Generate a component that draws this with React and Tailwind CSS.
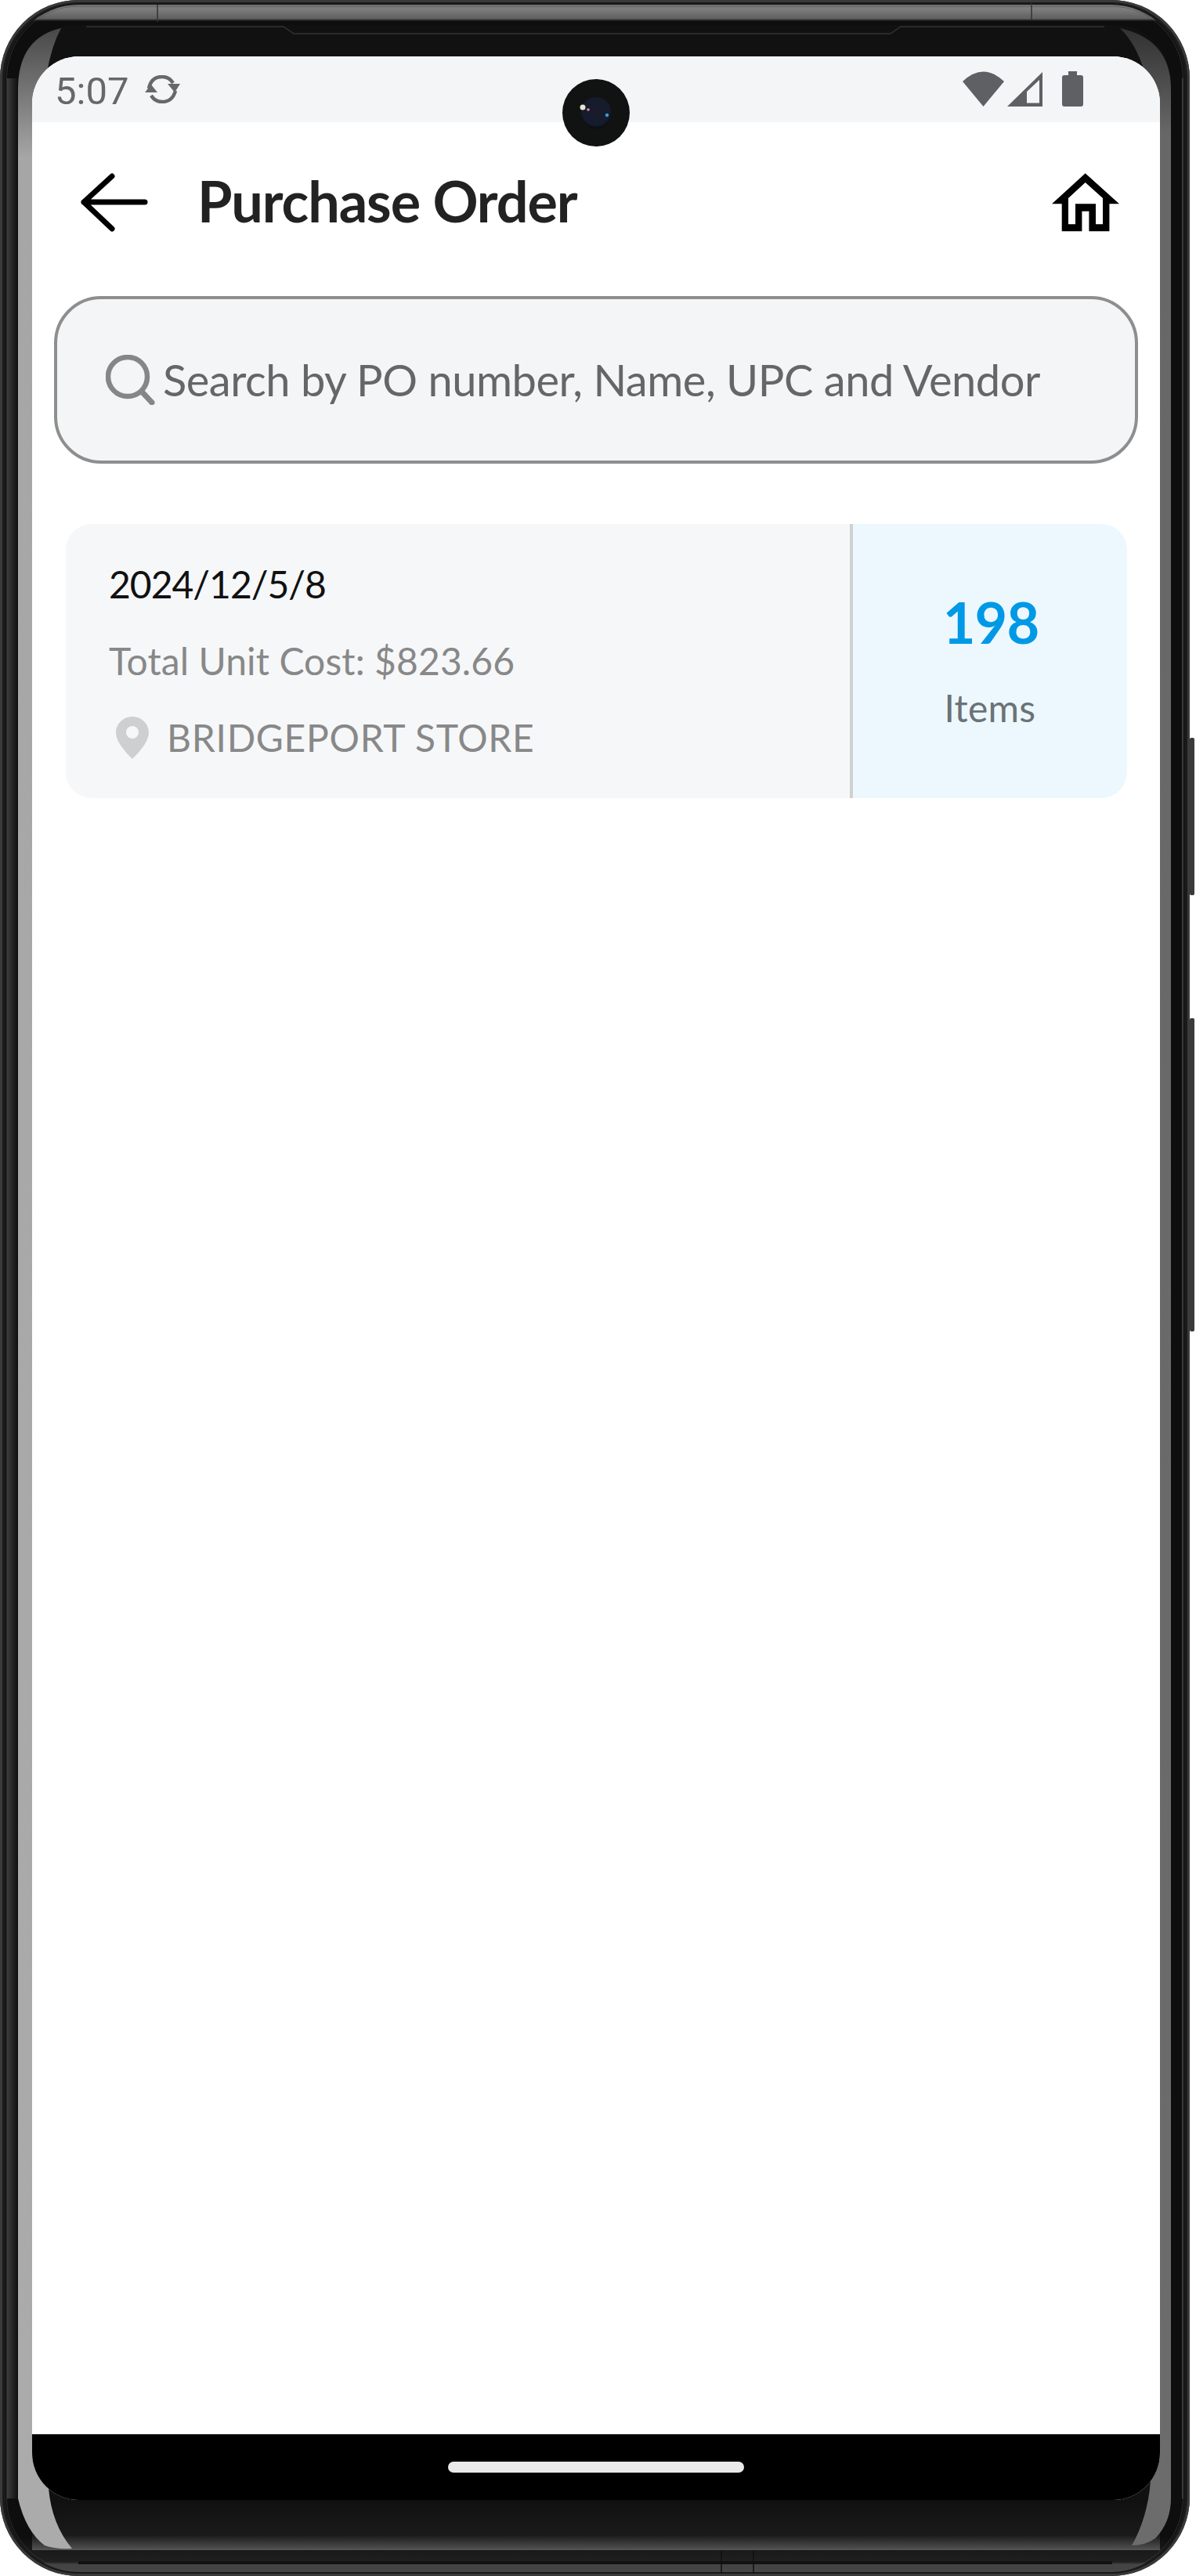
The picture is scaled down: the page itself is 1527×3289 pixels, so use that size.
const Bezel = () => (
  <svg className="absolute inset-0" width="1527" height="3289" viewBox="0 0 1527 3289">
    <defs>
      <linearGradient id="band" gradientUnits="userSpaceOnUse" x1="0" y1="0" x2="0" y2="3289">
        <stop offset="0.0018" stopColor="#747474" />
        <stop offset="0.0035" stopColor="#7e7e7e" />
        <stop offset="0.0072" stopColor="#606060" />
        <stop offset="0.0082" stopColor="#0e0e0e" />
        <stop offset="0.985" stopColor="#0e0e0e" />
        <stop offset="0.9905" stopColor="#1a1a1a" />
        <stop offset="0.9945" stopColor="#202020" />
        <stop offset="0.9955" stopColor="#444444" />
        <stop offset="0.9985" stopColor="#444444" />
        <stop offset="1" stopColor="#222222" />
      </linearGradient>
      <linearGradient id="glass" gradientUnits="userSpaceOnUse" x1="0" y1="3192" x2="0" y2="3256">
        <stop offset="0" stopColor="#101010" />
        <stop offset="0.7" stopColor="#1a1a1a" />
        <stop offset="0.95" stopColor="#4a4a4a" />
        <stop offset="1" stopColor="#555555" />
      </linearGradient>
      <linearGradient id="leftBand" gradientUnits="userSpaceOnUse" x1="0" y1="40" x2="0" y2="3260">
        <stop offset="0" stopColor="#4a4a4a" />
        <stop offset="0.05" stopColor="#a6a6a6" />
        <stop offset="1" stopColor="#ababab" />
      </linearGradient>
      <linearGradient id="rightBand" gradientUnits="userSpaceOnUse" x1="0" y1="40" x2="0" y2="3260">
        <stop offset="0" stopColor="#333333" />
        <stop offset="0.04" stopColor="#676767" />
        <stop offset="1" stopColor="#6c6c6c" />
      </linearGradient>
      <linearGradient id="leftStrip" x1="0" y1="0" x2="1" y2="0">
        <stop offset="0" stopColor="#3c3c3c" />
        <stop offset="1" stopColor="#0e0e0e" />
      </linearGradient>
      <radialGradient id="lens" cx="0.5" cy="0.45" r="0.55">
        <stop offset="0" stopColor="#1a1a2a" />
        <stop offset="0.8" stopColor="#141c2c" />
        <stop offset="1" stopColor="#0a0a0e" />
      </radialGradient>
    </defs>
    <rect x="1519" y="942" width="6" height="201" rx="2" fill="#3a3a3a" />
    <rect x="1519" y="1300" width="6" height="400" rx="2" fill="#3a3a3a" />
    <rect x="0" y="0" width="1519" height="3289" rx="100" fill="#1a1a1a" />
    <rect x="1.5" y="1.5" width="1516" height="3286" rx="99" fill="none" stroke="#3a3a3a" strokeWidth="3" />
    <rect x="7" y="6" width="1505" height="3278" rx="94" fill="url(#band)" />
    <rect x="8.5" y="8" width="1502" height="3274" rx="92" fill="none" stroke="#4c4c4c" strokeWidth="1" strokeOpacity="0.5" />
    <rect x="9" y="100" width="14" height="3090" fill="url(#leftStrip)" />
    <rect x="1509" y="100" width="2" height="3090" fill="#3a3a3a" />
    <rect x="23" y="32" width="1472" height="3224" rx="72" fill="#111111" />
    <rect x="41" y="3192" width="1440" height="64" fill="url(#glass)" />
    <path d="M23 3190 L23 112 Q24 48 78 36 Q66 58 60 92 L62 3177 Q66 3223 92 3254 Q70 3255 57 3250 Q33 3232 23 3190 Z" fill="url(#leftBand)" />
    <path d="M1495 112 Q1494 50 1430 36 Q1452 58 1461 92 L1469 3168 Q1465 3215 1445 3250 Q1462 3250 1475 3241 Q1495 3220 1495 3190 Z" fill="url(#rightBand)" />
    <path d="M110 34 H362 L375 43 H1137 L1150 34 H1410" fill="none" stroke="#333333" strokeWidth="1.5" />
    <path d="M201 6 V28 M1317 4 V26" stroke="#333333" strokeWidth="1.5" />
    <path d="M921 3256 V3286 M962 3256 V3286" stroke="#111111" strokeWidth="1.5" />
    <path d="M100 3272 H1420" stroke="#111111" strokeWidth="4" />
  </svg>
);

const Camera = () => (
  <svg className="absolute left-[677px] top-[101px]" width="86" height="86" viewBox="0 0 86 86">
    <circle cx="43" cy="43" r="43" fill="#111312" />
    <circle cx="43" cy="43" r="20" fill="url(#lens)" />
    <circle cx="26" cy="36" r="3.5" fill="#e6e6d0" />
    <circle cx="33" cy="39" r="1.8" fill="#d48aa8" />
    <circle cx="57" cy="46" r="2.2" fill="#3f9be0" />
  </svg>
);

const SyncIcon = () => (
  <svg width="46" height="36" viewBox="188 96 46 36" className="ml-[21px]">
    <path d="M193 113 Q196 98 210 98 Q219 98 224 106" fill="none" stroke="#66686a" strokeWidth="4.5" />
    <path d="M227 116 Q223 130 210 130 Q201 130 196 122" fill="none" stroke="#66686a" strokeWidth="4.5" />
    <path d="M217 107 H233 L226 118 Z" fill="#66686a" />
    <path d="M188 118 H204 L196 108 Z" fill="#66686a" />
  </svg>
);

const Wifi = () => (
  <svg width="53" height="46" viewBox="1229 90 53 46">
    <path d="M1229 103 Q1255.5 78 1282 103 L1255.5 135 Z" fill="#5f6063" />
  </svg>
);

const Signal = () => (
  <svg width="45" height="45" viewBox="1286 92 45 45" className="ml-[4px]">
    <path d="M1286 136 L1331 92 V136 Z M1311 131.5 H1327 V102 L1311 117 Z" fill="#5f6063" fillRule="evenodd" />
  </svg>
);

const Battery = () => (
  <svg width="27" height="46" viewBox="1356 91 27 46" className="ml-[25px] mr-[98px]">
    <path d="M1364 91 H1375 V96 H1380 Q1383 96 1383 99 V133 Q1383 136 1380 136 H1359 Q1356 136 1356 133 V99 Q1356 96 1359 96 H1364 Z" fill="#5f6063" />
  </svg>
);

const Back = () => (
  <svg width="90" height="78" viewBox="100 219 90 78" className="ml-[59px]">
    <path d="M143 225 L107 258 L143 292 M107 258 H185" fill="none" stroke="#000" strokeWidth="7" strokeLinecap="round" strokeLinejoin="round" />
  </svg>
);

const Home = () => (
  <svg width="86" height="75" viewBox="1343.3 218 86 75" className="mr-[52px]">
    <path
      fillRule="evenodd"
      fill="#000"
      d="M1386 218.3 L1429.3 257.3 H1416.7 V292.3 H1390.7 V266.7 H1381.7 V292.3 H1356 V257.3 H1343.3 Z M1386 230 L1364.3 250 V283.3 H1373.3 V257.3 H1399.3 V283.3 H1408.3 V250 Z"
    />
  </svg>
);

const SearchIcon = () => (
  <svg width="63" height="64" viewBox="0 0 63 64" className="shrink-0">
    <circle cx="28" cy="28" r="25" fill="none" stroke="#868686" strokeWidth="6.5" />
    <path d="M46 47 L59 61" stroke="#868686" strokeWidth="7" strokeLinecap="round" />
  </svg>
);

const Pin = () => (
  <svg width="42" height="54" viewBox="0 0 42 54" className="shrink-0">
    <path
      fillRule="evenodd"
      fill="#cdcfd1"
      d="M21 0 C9.4 0 0 9.2 0 20.6 C0 35 21 54 21 54 C21 54 42 35 42 20.6 C42 9.2 32.6 0 21 0 Z M21 28 A8 8 0 1 1 21 12 A8 8 0 0 1 21 28 Z"
    />
  </svg>
);

export default function App() {
  return (
    <div className="relative w-[1527px] h-[3289px] bg-white font-['Lato',sans-serif] overflow-hidden">
      <Bezel />
      <div className="relative ml-[41px] pt-[72px] w-[1440px]">
        <div className="relative h-[3120px] w-[1440px] rounded-[60px] overflow-hidden bg-white flex flex-col">
          <div className="h-[84px] shrink-0 bg-[#f4f5f7] flex items-center pl-[29px]">
            <span className="mt-[4px] font-['Roboto',sans-serif] text-[49px] leading-none text-[#66686a]">5:07</span>
            <SyncIcon />
            <div className="flex-1" />
            <Wifi />
            <Signal />
            <Battery />
          </div>
          <div className="h-[204px] shrink-0 flex items-center">
            <Back />
            <h1 className="ml-[62px] mb-[4px] text-[72px] leading-none font-bold text-[#222222] tracking-[-1.1px]">Purchase Order</h1>
            <div className="flex-1" />
            <Home />
          </div>
          <div className="mt-[18px] ml-[28px] w-[1384px] h-[214px] shrink-0 rounded-[60px] border-[4px] border-[#8e8e8e] bg-[#f4f5f7] flex items-center pl-[62px]">
            <SearchIcon />
            <span className="ml-[10px] text-[56px] leading-none text-[#666666] tracking-[-0.46px]">Search by PO number, Name, UPC and Vendor</span>
          </div>
          <div className="mt-[77px] ml-[43px] w-[1355px] h-[350px] shrink-0 rounded-[33px] overflow-hidden flex">
            <div className="flex-1 bg-[#f6f7f9] border-r-[4px] border-[#d0d0d0] flex flex-col justify-center pl-[55px] gap-[42px]">
              <div className="text-[48px] leading-[56px] text-[#111111] tracking-[-1px]">2024/12/5/8</div>
              <div className="text-[48px] leading-[56px] text-[#888888] tracking-[0.1px]">Total Unit Cost: $823.66</div>
              <div className="flex items-center h-[56px]">
                <span className="ml-[9px] flex"><Pin /></span>
                <span className="ml-[23px] text-[48px] leading-[56px] text-[#888888] tracking-[0.7px]">BRIDGEPORT STORE</span>
              </div>
            </div>
            <div className="w-[350px] shrink-0 bg-[#edf8fe] flex flex-col items-center justify-center pb-[4px]">
              <div className="ml-[2px] text-[72px] leading-[84px] font-bold text-[#0099e6] tracking-[-1px]">198</div>
              <div className="mt-[40px] text-[48px] leading-[56px] text-[#6c7275] tracking-[0.3px]">Items</div>
            </div>
          </div>
          <div className="flex-1" />
          <div className="h-[84px] shrink-0 bg-black flex items-center justify-center">
            <div className="w-[378px] h-[14px] rounded-[7px] bg-[#e9e9e9]" />
          </div>
        </div>
        <Camera />
      </div>
    </div>
  );
}
